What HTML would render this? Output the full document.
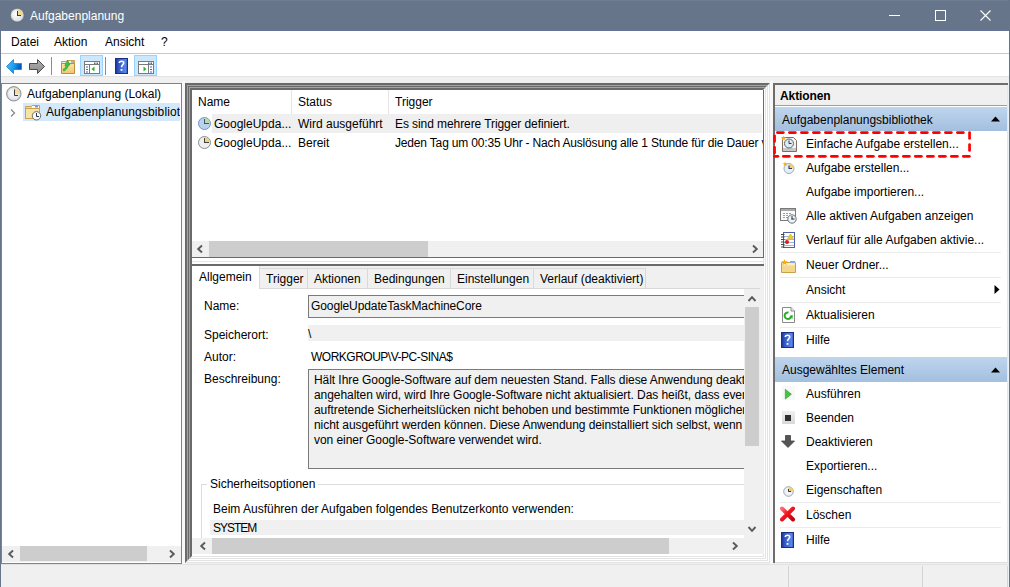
<!DOCTYPE html>
<html><head><meta charset="utf-8">
<style>
*{margin:0;padding:0;box-sizing:border-box}
html,body{width:1010px;height:587px;overflow:hidden;background:#f0f0f0;font-family:"Liberation Sans",sans-serif;font-size:12px;color:#000}
.a{position:absolute}
.t{position:absolute;white-space:nowrap;line-height:14px}
svg{position:absolute;overflow:visible}
</style></head><body>
<!-- window borders -->
<div class="a" style="left:0;top:0;width:1010px;height:31px;background:#667589;border-top:1px solid #6e7d91;border-bottom:1px solid #68739a"></div>
<div class="a" style="left:0;top:0;width:1px;height:587px;background:#667589"></div>
<div class="a" style="left:1009px;top:0;width:1px;height:587px;background:#667589"></div>
<!-- title -->
<svg style="left:10px;top:8px" width="15" height="15" viewBox="0 0 15 15">
<defs><radialGradient id="tf" cx="0.4" cy="0.4" r="0.7"><stop offset="0" stop-color="#ffffff"/><stop offset="1" stop-color="#d8dde4"/></radialGradient></defs>
<circle cx="7.2" cy="7.2" r="6.9" fill="#cfcfcf" stroke="#5a5f66" stroke-width="0.6"/>
<circle cx="7.2" cy="7.2" r="5.6" fill="url(#tf)"/>
<path d="M7.2 1.6 A5.6 5.6 0 0 1 12.8 7.2 L7.2 7.2Z" fill="#f0d88e"/>
<rect x="7" y="3" width="1" height="5" fill="#2e3a48"/><rect x="7" y="7" width="4" height="1" fill="#2e3a48"/>
</svg>
<div class="t" style="left:30px;top:9px;color:#fff">Aufgabenplanung</div>
<!-- window buttons -->
<div class="a" style="left:889px;top:15px;width:11px;height:1px;background:#fff"></div>
<div class="a" style="left:935px;top:10px;width:11px;height:11px;border:1px solid #fff"></div>
<svg style="left:980px;top:10px" width="11" height="11"><path d="M0.5 0.5 L10.5 10.5 M10.5 0.5 L0.5 10.5" stroke="#fff" stroke-width="1.1"/></svg>

<!-- menu bar -->
<div class="a" style="left:1px;top:31px;width:1008px;height:23px;background:#fff;border-bottom:1px solid #c8c8c8"></div>
<div class="t" style="left:11px;top:35px">Datei</div>
<div class="t" style="left:54px;top:35px">Aktion</div>
<div class="t" style="left:105px;top:35px">Ansicht</div>
<div class="t" style="left:161px;top:35px">?</div>
<!-- toolbar -->
<div class="a" style="left:1px;top:54px;width:1008px;height:23px;background:#fff;border-bottom:1px solid #e3e3e3"></div>


<!-- toolbar icons -->
<svg style="left:6px;top:59px" width="16" height="15" viewBox="0 0 16 15">
<defs><linearGradient id="gb" x1="0" y1="0" x2="1" y2="0.3"><stop offset="0" stop-color="#4cc0ff"/><stop offset="0.55" stop-color="#1ea0f0"/><stop offset="1" stop-color="#0058b8"/></linearGradient></defs>
<path d="M0.5 7.5 L7.5 0.5 V4.5 H15.5 V10.5 H7.5 V14.5 Z" fill="url(#gb)" stroke="#2f86d0" stroke-width="0.9" stroke-linejoin="round"/>
</svg>
<svg style="left:29px;top:59px" width="16" height="15" viewBox="0 0 16 15">
<defs><linearGradient id="gg" x1="0" y1="0" x2="0" y2="1"><stop offset="0" stop-color="#b0b0b0"/><stop offset="1" stop-color="#8a8a8a"/></linearGradient></defs>
<path d="M15.5 7.5 L8.5 0.5 V4.5 H0.5 V10.5 H8.5 V14.5 Z" fill="url(#gg)" stroke="#4a4a4a" stroke-width="1" stroke-linejoin="round"/>
</svg>
<div class="a" style="left:51px;top:57px;width:1px;height:18px;background:#8c8c8c"></div>
<svg style="left:60px;top:59px" width="16" height="15" viewBox="0 0 16 15">
<defs><linearGradient id="gf" x1="0" y1="0" x2="0" y2="1"><stop offset="0" stop-color="#fbe6a6"/><stop offset="1" stop-color="#eec670"/></linearGradient></defs>
<path d="M1.5 2.5 H6 L7 1.5 H14.5 V5 H1.5Z" fill="#f8f0d8" stroke="#c8a050" stroke-width="1"/>
<rect x="11" y="2.3" width="3" height="1.4" fill="#7a9ad0"/>
<path d="M1.5 4.5 H14.5 V14.5 H1.5Z" fill="url(#gf)" stroke="#b89040" stroke-width="1"/>
<path d="M3 10.5 C4.5 9.5 5.5 8.5 6.2 6.5 L4.8 6.5 L7.5 1 L10 6 L8.6 6 C8 9 6 11 3.8 12Z" fill="#44c044" stroke="#2a9a2a" stroke-width="0.6" stroke-linejoin="round"/>
</svg>
<div class="a" style="left:80px;top:55px;width:23px;height:21px;background:#cce8ff;border:1px solid #99d1ff"></div>
<svg style="left:84px;top:61px" width="16" height="13" viewBox="0 0 16 13">
<rect x="0.5" y="0.5" width="15" height="12" fill="#fff" stroke="#7a7a7a"/>
<path d="M0.5 3.5 H15.5" stroke="#7a7a7a"/>
<rect x="10" y="1.5" width="1.5" height="1.5" fill="#666"/><rect x="12.5" y="1.5" width="1.5" height="1.5" fill="#666"/>
<path d="M5.5 3.5 V12.5" stroke="#7a7a7a"/>
<path d="M2 6 H4 M2 8.5 H4 M2 11 H4" stroke="#3a6fc0" stroke-width="1.1"/>
<path d="M10.5 5.5 L7.5 8 L10.5 10.5Z" fill="#2fae2f"/>
</svg>
<div class="a" style="left:105px;top:57px;width:1px;height:18px;background:#8c8c8c"></div>
<svg style="left:115px;top:58px" width="13" height="16" viewBox="0 0 13 16">
<defs><linearGradient id="gh" x1="0" y1="0" x2="1" y2="0"><stop offset="0" stop-color="#102a8a"/><stop offset="0.25" stop-color="#2f55c0"/><stop offset="0.8" stop-color="#5a86e8"/><stop offset="1" stop-color="#2a4cb0"/></linearGradient></defs>
<rect x="0" y="0" width="13" height="16" fill="url(#gh)"/>
<rect x="0.5" y="0.5" width="12" height="15" fill="none" stroke="#1a2e88" stroke-width="1"/>
<path d="M4.3 5 C4.3 2.8 8.7 2.6 8.7 5 C8.7 6.6 6.5 7 6.5 9.3" stroke="#fff" stroke-width="1.6" fill="none"/>
<rect x="5.6" y="11" width="1.8" height="1.8" fill="#fff"/>
</svg>
<div class="a" style="left:134px;top:55px;width:23px;height:21px;background:#cce8ff;border:1px solid #99d1ff"></div>
<svg style="left:138px;top:61px" width="16" height="13" viewBox="0 0 16 13">
<rect x="0.5" y="0.5" width="15" height="12" fill="#fff" stroke="#7a7a7a"/>
<path d="M0.5 3.5 H15.5" stroke="#7a7a7a"/>
<rect x="10" y="1.5" width="1.5" height="1.5" fill="#666"/><rect x="12.5" y="1.5" width="1.5" height="1.5" fill="#666"/>
<path d="M10.5 3.5 V12.5" stroke="#7a7a7a"/>
<path d="M12 6 H14 M12 8.5 H14 M12 11 H14" stroke="#3a6fc0" stroke-width="1.1"/>
<path d="M5.5 5.5 L8.5 8 L5.5 10.5Z" fill="#2fae2f"/>
</svg>

<!-- left panel -->
<div class="a" style="left:1px;top:83px;width:181px;height:481px;background:#fff;border:1px solid #828282"></div>


<!-- left tree -->
<svg style="left:6px;top:86px" width="16" height="16" viewBox="0 0 16 16">
<defs><radialGradient id="cf" cx="0.4" cy="0.4" r="0.7"><stop offset="0" stop-color="#fafcff"/><stop offset="1" stop-color="#dde4ec"/></radialGradient></defs>
<circle cx="7.8" cy="7.8" r="7.2" fill="#d8d8d8" stroke="#8c8c8c" stroke-width="1"/>
<circle cx="7.8" cy="7.8" r="5.8" fill="url(#cf)"/>
<path d="M7.8 2 A5.8 5.8 0 0 1 13.6 7.8 L7.8 7.8Z" fill="#f3dc9a"/>
<path d="M8.5 3.5 V9.5 H12" stroke="#3a3a3a" stroke-width="1" fill="none"/>
</svg>
<div class="t" style="left:27px;top:87px">Aufgabenplanung (Lokal)</div>
<div class="a" style="left:23px;top:103px;width:157px;height:18px;background:#d3e9fb"></div>
<svg style="left:10px;top:109px" width="6" height="8"><path d="M1 0.5 L4.5 4 L1 7.5" stroke="#8a8a8a" stroke-width="1.3" fill="none"/></svg>
<svg style="left:25px;top:104px" width="17" height="17" viewBox="0 0 17 17">
<path d="M0.5 2.5 H6 L7.5 1.5 H14.5 V14.5 H0.5Z" fill="#f3d88a" stroke="#c8a24e" stroke-width="1"/>
<rect x="7" y="2" width="7" height="2" fill="#fff"/>
<rect x="10" y="2" width="3" height="1.5" fill="#6a9ad8"/>
<path d="M0.5 4.5 H14.5 V14.5 H0.5Z" fill="#f7e3a4" stroke="#c8a24e" stroke-width="1"/>
<circle cx="11.5" cy="11.8" r="4.2" fill="#f6f8fa" stroke="#6e6e6e" stroke-width="1"/>
<path d="M11.5 9 V12.5 H14" stroke="#333" stroke-width="1" fill="none"/>
</svg>
<div class="a" style="left:46px;top:103px;width:134px;height:18px;overflow:hidden"><div class="t" style="left:0;top:2px;letter-spacing:0.12px">Aufgabenplanungsbibliothek</div></div>
<!-- left h scrollbar -->
<div class="a" style="left:2px;top:546px;width:179px;height:16px;background:#f0f0f0"></div>
<div class="a" style="left:20px;top:546px;width:127px;height:15px;background:#cdcdcd"></div>
<svg style="left:8px;top:550px" width="6" height="8"><path d="M5 0.5 L1.2 4 L5 7.5" stroke="#5a5a5a" stroke-width="1.9" fill="none"/></svg>
<svg style="left:169px;top:550px" width="6" height="8"><path d="M1 0.5 L4.8 4 L1 7.5" stroke="#5a5a5a" stroke-width="1.9" fill="none"/></svg>

<!-- middle frame -->
<div class="a" style="left:182px;top:81px;width:3px;height:483px;background:#f8f8f8"></div><div class="a" style="left:770px;top:81px;width:3px;height:483px;background:#f8f8f8"></div>
<div class="a" style="left:185px;top:83px;width:585px;height:480px"><div style="box-sizing:border-box;width:100%;height:100%;border:1px solid;border-color:#6a6a6a #e3e3e3 #e3e3e3 #6a6a6a"><div style="box-sizing:border-box;width:100%;height:100%;border:1px solid;border-color:#6a6a6a #ffffff #ffffff #6a6a6a"><div style="box-sizing:border-box;width:100%;height:100%;border:1px solid;border-color:#a4a4a4 #e3e3e3 #e3e3e3 #a4a4a4"><div style="box-sizing:border-box;width:100%;height:100%;border:1px solid;border-color:#6a6a6a #ffffff #ffffff #6a6a6a"><div style="box-sizing:border-box;width:100%;height:100%;border:1px solid;border-color:#a4a4a4 #e3e3e3 #e3e3e3 #a4a4a4"><div style="box-sizing:border-box;width:100%;height:100%;border:1px solid;border-color:#6a6a6a #ffffff #ffffff #6a6a6a"><div style="box-sizing:border-box;width:100%;height:100%;border:1px solid;border-color:#6a6a6a #e3e3e3 #e3e3e3 #6a6a6a"><div style="width:100%;height:100%;background:#fff"></div></div></div></div></div></div></div></div></div>
<!-- top list -->
<div class="a" style="left:192px;top:90px;width:572px;height:168px;background:#fff;border-right:1px solid #6a6a6a;border-bottom:1px solid #6a6a6a"></div>
<div class="a" style="left:192px;top:261px;width:572px;height:1px;background:#e6e6e6"></div>

<!-- top list content -->
<div class="a" style="left:291px;top:90px;width:1px;height:24px;background:#e5e5e5"></div>
<div class="a" style="left:388px;top:90px;width:1px;height:24px;background:#e5e5e5"></div>
<div class="t" style="left:198px;top:95px">Name</div>
<div class="t" style="left:298px;top:95px">Status</div>
<div class="t" style="left:395px;top:95px">Trigger</div>
<div class="a" style="left:212px;top:114px;width:550px;height:19px;background:#efefef"></div>
<svg style="left:198px;top:117px" width="13" height="13" viewBox="0 0 13 13">
<circle cx="6.5" cy="6.5" r="6" fill="#b9d3ee" stroke="#6f93c0" stroke-width="1"/>
<path d="M6.5 1 A5.5 5.5 0 0 1 12 6.5 L6.5 6.5Z" fill="#bcd9a8"/>
<rect x="6" y="2" width="1" height="5" fill="#3d5573"/><rect x="6" y="6" width="5" height="1" fill="#3d5573"/>
</svg>
<svg style="left:198px;top:136px" width="13" height="13" viewBox="0 0 13 13">
<circle cx="6.5" cy="6.5" r="6" fill="#eeeeee" stroke="#8c8c8c" stroke-width="1"/>
<path d="M6.5 1 A5.5 5.5 0 0 1 12 6.5 L6.5 6.5Z" fill="#e9d48a"/>
<rect x="6" y="2" width="1" height="5" fill="#404040"/><rect x="6" y="6" width="5" height="1" fill="#404040"/>
</svg>
<div class="t" style="left:214px;top:117px">GoogleUpda...</div>
<div class="t" style="left:298px;top:117px">Wird ausgeführt</div>
<div class="t" style="left:395px;top:117px;letter-spacing:-0.08px">Es sind mehrere Trigger definiert.</div>
<div class="t" style="left:214px;top:136px">GoogleUpda...</div>
<div class="t" style="left:298px;top:136px">Bereit</div>
<div class="a" style="left:395px;top:130px;width:368px;height:20px;overflow:hidden"><div class="t" style="left:0;top:6px;letter-spacing:-0.17px">Jeden Tag um 00:35 Uhr - Nach Auslösung alle 1 Stunde für die Dauer von 1 Tag</div></div>
<!-- top list h scrollbar -->
<div class="a" style="left:192px;top:241px;width:571px;height:16px;background:#f0f0f0"></div>
<div class="a" style="left:209px;top:241px;width:219px;height:16px;background:#cdcdcd"></div>
<svg style="left:197px;top:245px" width="6" height="8"><path d="M5 0.5 L1.2 4 L5 7.5" stroke="#5a5a5a" stroke-width="1.9" fill="none"/></svg>
<svg style="left:752px;top:245px" width="6" height="8"><path d="M1 0.5 L4.8 4 L1 7.5" stroke="#5a5a5a" stroke-width="1.9" fill="none"/></svg>

<!-- lower pane -->
<div class="a" style="left:190px;top:264px;width:574px;height:290px;background:#f0f0f0;border-top:2px solid #6a6a6a;border-left:2px solid #6a6a6a"></div>


<!-- tabs -->
<div class="a" style="left:260px;top:268px;width:48px;height:20px;background:#f0f0f0;border-top:1px solid #d9d9d9;border-right:1px solid #d9d9d9"></div>
<div class="a" style="left:308px;top:268px;width:60px;height:20px;background:#f0f0f0;border-top:1px solid #d9d9d9;border-right:1px solid #d9d9d9"></div>
<div class="a" style="left:368px;top:268px;width:83px;height:20px;background:#f0f0f0;border-top:1px solid #d9d9d9;border-right:1px solid #d9d9d9"></div>
<div class="a" style="left:451px;top:268px;width:83px;height:20px;background:#f0f0f0;border-top:1px solid #d9d9d9;border-right:1px solid #d9d9d9"></div>
<div class="a" style="left:534px;top:268px;width:112px;height:20px;background:#f0f0f0;border-top:1px solid #d9d9d9;border-right:1px solid #d9d9d9"></div>
<!-- tab page -->
<div class="a" style="left:192px;top:288px;width:568px;height:250px;background:#fff;border-top:1px solid #d9d9d9"></div>
<div class="a" style="left:192px;top:266px;width:68px;height:23px;background:#fff;border-right:1px solid #d9d9d9"></div>
<div class="t" style="left:199px;top:270px">Allgemein</div>
<div class="t" style="left:266px;top:272px">Trigger</div>
<div class="t" style="left:314px;top:272px">Aktionen</div>
<div class="t" style="left:374px;top:272px">Bedingungen</div>
<div class="t" style="left:457px;top:272px">Einstellungen</div>
<div class="t" style="left:540px;top:272px">Verlauf (deaktiviert)</div>
<div class="a" style="left:192px;top:290px;width:552px;height:248px;overflow:hidden">
  <div class="t" style="left:12px;top:9px">Name:</div>
  <div class="a" style="left:116px;top:5px;width:460px;height:23px;background:#f0f0f0;border:1px solid #7a7a7a"></div>
  <div class="t" style="left:119px;top:9px;letter-spacing:-0.1px">GoogleUpdateTaskMachineCore</div>
  <div class="t" style="left:12px;top:38px">Speicherort:</div>
  <div class="a" style="left:116px;top:35px;width:460px;height:16px;background:#f0f0f0"></div>
  <div class="t" style="left:116px;top:37px">\</div>
  <div class="t" style="left:12px;top:60px">Autor:</div>
  <div class="t" style="left:119px;top:60px;letter-spacing:-0.5px">WORKGROUP\V-PC-SINA$</div>
  <div class="t" style="left:12px;top:82px">Beschreibung:</div>
  <div class="a" style="left:116px;top:79px;width:460px;height:100px;background:#f0f0f0;border:1px solid #7a7a7a"></div>
  <div class="a" style="left:122px;top:83px;width:500px;line-height:15px;white-space:nowrap;letter-spacing:-0.06px">Hält Ihre Google-Software auf dem neuesten Stand. Falls diese Anwendung deaktiviert oder<br>angehalten wird, wird Ihre Google-Software nicht aktualisiert. Das heißt, dass eventuell<br>auftretende Sicherheitslücken nicht behoben und bestimmte Funktionen möglicherweise<br>nicht ausgeführt werden können. Diese Anwendung deinstalliert sich selbst, wenn sie<br>von einer Google-Software verwendet wird.</div>
  <div class="a" style="left:9px;top:194px;width:600px;height:80px;border:1px solid #dcdcdc"></div>
  <div class="t" style="left:18px;top:187px;background:#fff;padding:0 3px 0 3px;margin-left:-3px">Sicherheitsoptionen</div>
  <div class="t" style="left:21px;top:212px">Beim Ausführen der Aufgaben folgendes Benutzerkonto verwenden:</div>
  <div class="a" style="left:18px;top:230px;width:560px;height:15px;background:#f0f0f0"></div>
  <div class="t" style="left:21px;top:231px;letter-spacing:-1px">SYSTEM</div>
</div>
<!-- v scrollbar -->
<div class="a" style="left:744px;top:289px;width:16px;height:249px;background:#f0f0f0"></div>
<div class="a" style="left:745px;top:307px;width:14px;height:139px;background:#cdcdcd"></div>
<svg style="left:748px;top:296px" width="8" height="6"><path d="M0.5 5 L4 1.2 L7.5 5" stroke="#5a5a5a" stroke-width="1.9" fill="none"/></svg>
<svg style="left:748px;top:526px" width="8" height="6"><path d="M0.5 1 L4 4.8 L7.5 1" stroke="#5a5a5a" stroke-width="1.9" fill="none"/></svg>
<!-- h scrollbar -->
<div class="a" style="left:192px;top:538px;width:552px;height:16px;background:#f0f0f0"></div>
<div class="a" style="left:212px;top:538px;width:457px;height:16px;background:#cdcdcd"></div>
<svg style="left:200px;top:542px" width="6" height="8"><path d="M5 0.5 L1.2 4 L5 7.5" stroke="#5a5a5a" stroke-width="1.9" fill="none"/></svg>
<svg style="left:732px;top:542px" width="6" height="8"><path d="M1 0.5 L4.8 4 L1 7.5" stroke="#5a5a5a" stroke-width="1.9" fill="none"/></svg>

<!-- right panel -->
<div class="a" style="left:773px;top:83px;width:235px;height:480px;background:#fff;border-left:2px solid #6d6d6d;border-top:2px solid #6d6d6d"></div>


<!-- right panel content -->
<div class="a" style="left:775px;top:85px;width:233px;height:21px;background:#f0f0f0;border-bottom:1px solid #a0a0a0"></div>
<div class="t" style="left:780px;top:89px;font-weight:bold;letter-spacing:-0.1px">Aktionen</div>
<div class="a" style="left:775px;top:107px;width:232px;height:24px;background:linear-gradient(#bed5ed,#a3bfdf)"></div>
<div class="t" style="left:782px;top:113px">Aufgabenplanungsbibliothek</div>
<svg style="left:991px;top:116px" width="10" height="6"><path d="M0 5.5 L4.5 0.5 L9 5.5Z" fill="#000"/></svg>
<div class="a" style="left:775px;top:357px;width:232px;height:25px;background:linear-gradient(#bed5ed,#a3bfdf)"></div>
<div class="t" style="left:782px;top:363px">Ausgewähltes Element</div>
<svg style="left:991px;top:367px" width="10" height="6"><path d="M0 5.5 L4.5 0.5 L9 5.5Z" fill="#000"/></svg>
<!-- separators -->
<div class="a" style="left:780px;top:252px;width:221px;height:1px;background:#ececec"></div>
<div class="a" style="left:780px;top:277px;width:221px;height:1px;background:#ececec"></div>
<div class="a" style="left:780px;top:302px;width:221px;height:1px;background:#ececec"></div>
<div class="a" style="left:780px;top:327px;width:221px;height:1px;background:#ececec"></div>
<div class="a" style="left:780px;top:502px;width:221px;height:1px;background:#ececec"></div>
<div class="a" style="left:780px;top:527px;width:221px;height:1px;background:#ececec"></div>
<div class="t" style="left:806px;top:137px">Einfache Aufgabe erstellen...</div>
<div class="t" style="left:806px;top:161px">Aufgabe erstellen...</div>
<div class="t" style="left:806px;top:185px">Aufgabe importieren...</div>
<div class="t" style="left:806px;top:209px">Alle aktiven Aufgaben anzeigen</div>
<div class="t" style="left:806px;top:233px">Verlauf für alle Aufgaben aktivie...</div>
<div class="t" style="left:806px;top:258px">Neuer Ordner...</div>
<div class="t" style="left:806px;top:283px">Ansicht</div>
<svg style="left:994px;top:285px" width="6" height="10"><path d="M0.5 0 L5.5 4.5 L0.5 9Z" fill="#000"/></svg>
<div class="t" style="left:806px;top:308px">Aktualisieren</div>
<div class="t" style="left:806px;top:333px">Hilfe</div>
<div class="t" style="left:806px;top:387px">Ausführen</div>
<div class="t" style="left:806px;top:411px">Beenden</div>
<div class="t" style="left:806px;top:435px">Deaktivieren</div>
<div class="t" style="left:806px;top:459px">Exportieren...</div>
<div class="t" style="left:806px;top:483px">Eigenschaften</div>
<div class="t" style="left:806px;top:508px">Löschen</div>
<div class="t" style="left:806px;top:533px">Hilfe</div>

<!-- right icons -->
<svg style="left:781px;top:135px" width="17" height="18" viewBox="0 0 17 18">
<path d="M1.5 2.5 H12.5 L15.5 5.5 V16.5 H1.5Z" fill="#f4f4f4" stroke="#7a6e66" stroke-width="1"/>
<rect x="2" y="13" width="13" height="3" fill="#c8c8c8"/>
<circle cx="8" cy="8.5" r="4.5" fill="#dfeaf4" stroke="#5a6570" stroke-width="1"/>
<path d="M8 5.5 V8.5 H10.5" stroke="#2a3a4a" stroke-width="1" fill="none"/>
<path d="M2.5 0.5 L3.2 2.6 L5.3 2.5 L3.6 3.8 L4.3 5.8 L2.5 4.6 L0.7 5.8 L1.4 3.8 L-0.3 2.5 L1.8 2.6Z" fill="#ffb000"/>
</svg>
<svg style="left:782px;top:161px" width="13" height="13" viewBox="0 0 13 13">
<circle cx="7" cy="7.5" r="5" fill="#e6eef6" stroke="#9aa8b8" stroke-width="1"/>
<path d="M7 2.5 A5 5 0 0 1 12 7.5 L7 7.5Z" fill="#f0d070"/>
<path d="M7 4.5 V7.5 H10" stroke="#2a3a5a" stroke-width="1.1" fill="none"/>
<path d="M3 0.5 L3.6 2.2 L5.4 2.2 L4 3.3 L4.5 5 L3 4 L1.5 5 L2 3.3 L0.6 2.2 L2.4 2.2Z" fill="#ffaa00"/>
</svg>
<svg style="left:780px;top:208px" width="17" height="16" viewBox="0 0 17 16">
<rect x="0.5" y="0.5" width="15" height="12" fill="#fafafa" stroke="#7a7a7a"/>
<rect x="1" y="1" width="14" height="2" fill="#a8a8a8"/>
<path d="M3 5.5 H5 M6 5.5 H8 M9 5.5 H11 M3 7.5 H5 M6 7.5 H8 M3 9.5 H5 M6 9.5 H8" stroke="#9aa0a8" stroke-width="1"/>
<circle cx="12" cy="11" r="4.2" fill="#eef3f8" stroke="#6a7580" stroke-width="1"/>
<rect x="11.5" y="8" width="1" height="3.5" fill="#333"/><rect x="11.5" y="10.5" width="3" height="1" fill="#333"/>
</svg>
<svg style="left:780px;top:232px" width="16" height="17" viewBox="0 0 16 17">
<rect x="3.5" y="0.5" width="11" height="15" fill="#fff" stroke="#5060a0"/>
<path d="M4 4.5 H14 M4 7.5 H14 M4 10.5 H14 M4 13.5 H14" stroke="#9ab8e0" stroke-width="1"/>
<path d="M1 2.5 H4.5 M1 5 H4.5 M1 7.5 H4.5 M1 10 H4.5 M1 12.5 H4.5 M1 15 H4.5" stroke="#444" stroke-width="1"/>
<path d="M10.5 2 L13.5 6.5 H7.5Z" fill="#f2d020" stroke="#c8a010" stroke-width="0.5"/>
<circle cx="7" cy="10" r="2" fill="#e01818"/>
</svg>
<svg style="left:781px;top:259px" width="16" height="14" viewBox="0 0 16 14">
<path d="M0.5 3.5 H14.5 V13.5 H0.5Z" fill="#f4d78e" stroke="#c8a04a" stroke-width="1"/>
<path d="M1 4 H14 V6.5 H1Z" fill="#fbecb8"/>
<rect x="9" y="2" width="5" height="2" fill="#8aa8d8"/>
<path d="M3.5 0 L4.3 2.3 L6.8 2.3 L4.8 3.8 L5.5 6.2 L3.5 4.8 L1.5 6.2 L2.2 3.8 L0.2 2.3 L2.7 2.3Z" fill="#ffa800"/>
</svg>
<svg style="left:782px;top:307px" width="13" height="16" viewBox="0 0 13 16">
<path d="M0.5 0.5 H9 L12.5 4 V15.5 H0.5Z" fill="#fff" stroke="#8a8a8a"/>
<path d="M9 0.5 V4 H12.5" fill="#eee" stroke="#8a8a8a"/>
<path d="M9.2 8.5 A3.3 3.3 0 1 1 6.5 5.5" stroke="#28b028" stroke-width="2" fill="none"/>
<path d="M7.5 9.5 L10.5 12 L10.8 8Z" fill="#28b028"/>
</svg>
<svg style="left:781px;top:332px" width="13" height="16" viewBox="0 0 13 16">
<defs><linearGradient id="gh2" x1="0" y1="0" x2="1" y2="0"><stop offset="0" stop-color="#102a8a"/><stop offset="0.25" stop-color="#2f55c0"/><stop offset="0.8" stop-color="#5a86e8"/><stop offset="1" stop-color="#2a4cb0"/></linearGradient></defs>
<rect x="0" y="0" width="13" height="16" fill="url(#gh2)"/>
<rect x="0.5" y="0.5" width="12" height="15" fill="none" stroke="#1b2f80" stroke-width="1"/>
<path d="M4.3 5 C4.3 2.8 8.7 2.6 8.7 5 C8.7 6.6 6.5 7 6.5 9.3" stroke="#fff" stroke-width="1.6" fill="none"/><rect x="5.6" y="11" width="1.8" height="1.8" fill="#fff"/>
</svg>
<div class="a" style="left:782px;top:386px;width:13px;height:14px;background:#f8f8f8"></div>
<svg style="left:785px;top:389px" width="7" height="11"><path d="M0.3 0.3 L6.4 5.2 L0.3 10.1Z" fill="#44c444" stroke="#2a9a2a" stroke-width="0.6"/></svg>
<div class="a" style="left:782px;top:411px;width:13px;height:13px;background:linear-gradient(#f0f0f0,#d8d8d8)"></div>
<div class="a" style="left:785px;top:415px;width:6px;height:6px;background:#303030"></div>
<svg style="left:782px;top:435px" width="13" height="13" viewBox="0 0 13 13"><path d="M3.5 0.5 H8.5 V6 H12.5 L6 12.5 L-0.5 6 H3.5Z" fill="#555" stroke="#444" stroke-width="0.8" stroke-linejoin="round"/></svg>
<svg style="left:783px;top:486px" width="11" height="11" viewBox="0 0 11 11">
<circle cx="5.5" cy="5.5" r="4.8" fill="#eef2f6" stroke="#9aa4b0" stroke-width="1"/>
<path d="M5.5 0.7 A4.8 4.8 0 0 1 10.3 5.5 L5.5 5.5Z" fill="#f0d070"/>
<path d="M5.5 3 V5.5 H8" stroke="#333" stroke-width="1" fill="none"/>
</svg>
<svg style="left:779px;top:506px" width="17" height="17" viewBox="0 0 17 17">
<defs><linearGradient id="gx" x1="0" y1="0" x2="1" y2="1"><stop offset="0" stop-color="#ff6a70"/><stop offset="0.45" stop-color="#f01820"/><stop offset="1" stop-color="#c00010"/></linearGradient></defs><path d="M3 2.5 L14 13.5 M14 2.5 L3 13.5" stroke="url(#gx)" stroke-width="4" stroke-linecap="round"/>
</svg>
<svg style="left:781px;top:532px" width="13" height="16" viewBox="0 0 13 16">
<rect x="0" y="0" width="13" height="16" fill="url(#gh2)"/>
<rect x="0.5" y="0.5" width="12" height="15" fill="none" stroke="#1b2f80" stroke-width="1"/>
<path d="M4.3 5 C4.3 2.8 8.7 2.6 8.7 5 C8.7 6.6 6.5 7 6.5 9.3" stroke="#fff" stroke-width="1.6" fill="none"/><rect x="5.6" y="11" width="1.8" height="1.8" fill="#fff"/>
</svg>

<!-- red dashed box -->
<svg style="left:0;top:0" width="1010" height="587" viewBox="0 0 1010 587"><g fill="#f00"><rect x="776.0" y="131.2" width="8.7" height="2.7" rx="1.35"/><rect x="788.0" y="131.2" width="8.7" height="2.7" rx="1.35"/><rect x="800.0" y="131.2" width="8.7" height="2.7" rx="1.35"/><rect x="812.0" y="131.2" width="8.7" height="2.7" rx="1.35"/><rect x="824.0" y="131.2" width="8.7" height="2.7" rx="1.35"/><rect x="836.0" y="131.2" width="8.7" height="2.7" rx="1.35"/><rect x="848.0" y="131.2" width="8.7" height="2.7" rx="1.35"/><rect x="860.0" y="131.2" width="8.7" height="2.7" rx="1.35"/><rect x="872.0" y="131.2" width="8.7" height="2.7" rx="1.35"/><rect x="884.0" y="131.2" width="8.7" height="2.7" rx="1.35"/><rect x="896.0" y="131.2" width="8.7" height="2.7" rx="1.35"/><rect x="908.0" y="131.2" width="8.7" height="2.7" rx="1.35"/><rect x="920.0" y="131.2" width="8.7" height="2.7" rx="1.35"/><rect x="932.0" y="131.2" width="8.7" height="2.7" rx="1.35"/><rect x="944.0" y="131.2" width="8.7" height="2.7" rx="1.35"/><rect x="956.0" y="131.2" width="8.7" height="2.7" rx="1.35"/><rect x="968.2" y="131.2" width="2.7" height="8.6" rx="1.35"/><rect x="968.2" y="143.2" width="2.7" height="8.6" rx="1.35"/><rect x="773.2" y="155.0" width="6.0" height="2.7" rx="1.35"/><rect x="782.0" y="155.0" width="8.7" height="2.7" rx="1.35"/><rect x="794.0" y="155.0" width="8.7" height="2.7" rx="1.35"/><rect x="806.0" y="155.0" width="8.7" height="2.7" rx="1.35"/><rect x="818.0" y="155.0" width="8.7" height="2.7" rx="1.35"/><rect x="830.0" y="155.0" width="8.7" height="2.7" rx="1.35"/><rect x="842.0" y="155.0" width="8.7" height="2.7" rx="1.35"/><rect x="854.0" y="155.0" width="8.7" height="2.7" rx="1.35"/><rect x="866.0" y="155.0" width="8.7" height="2.7" rx="1.35"/><rect x="878.0" y="155.0" width="8.7" height="2.7" rx="1.35"/><rect x="890.0" y="155.0" width="8.7" height="2.7" rx="1.35"/><rect x="902.0" y="155.0" width="8.7" height="2.7" rx="1.35"/><rect x="914.0" y="155.0" width="8.7" height="2.7" rx="1.35"/><rect x="926.0" y="155.0" width="8.7" height="2.7" rx="1.35"/><rect x="938.0" y="155.0" width="8.7" height="2.7" rx="1.35"/><rect x="950.0" y="155.0" width="8.7" height="2.7" rx="1.35"/><rect x="962.0" y="155.0" width="8.7" height="2.7" rx="1.35"/><rect x="773.2" y="134.4" width="2.7" height="8.4" rx="1.35"/><rect x="773.2" y="146.0" width="2.7" height="8.4" rx="1.35"/></g></svg>

<!-- status bar separators -->
<div class="a" style="left:1px;top:564px;width:1008px;height:1px;background:#e2e2e2"></div>
<div class="a" style="left:775px;top:562px;width:233px;height:1px;background:#dcdcdc"></div>
<div class="a" style="left:1007px;top:85px;width:1px;height:478px;background:#e6e6e6"></div>
<div class="a" style="left:788px;top:566px;width:1px;height:21px;background:#d4d4d4"></div>
<div class="a" style="left:922px;top:566px;width:1px;height:21px;background:#d4d4d4"></div>
<div class="a" style="left:1007px;top:566px;width:1px;height:21px;background:#d4d4d4"></div>
</body></html>
